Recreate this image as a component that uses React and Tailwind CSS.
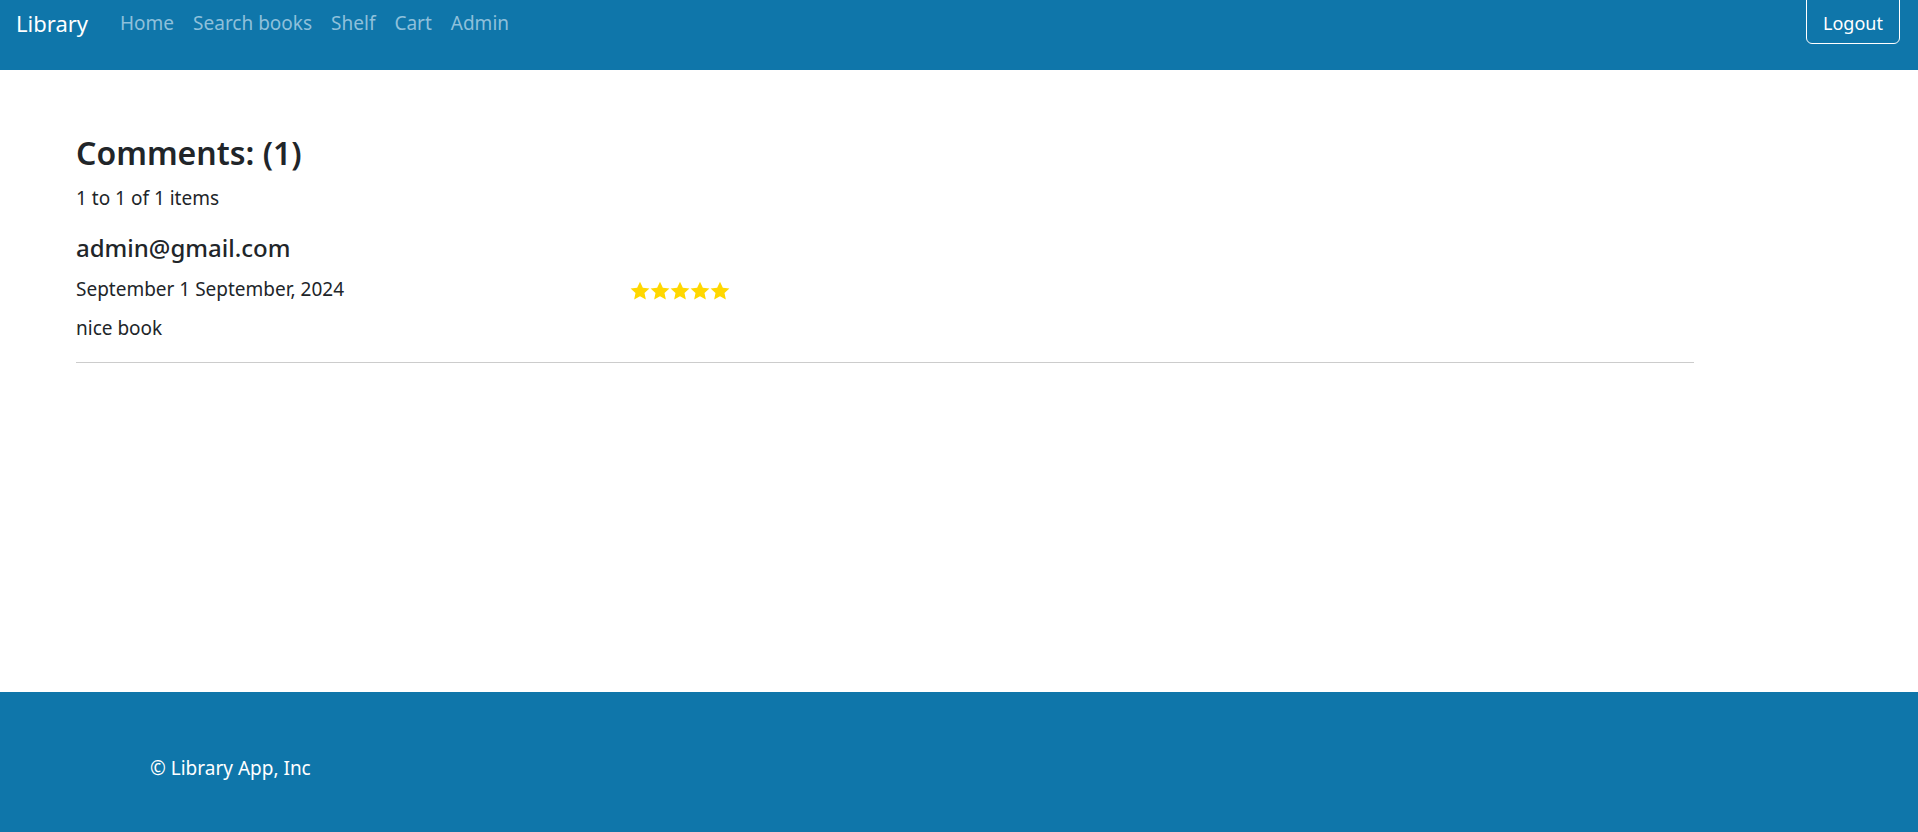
const navLinks = ["Home", "Search books", "Shelf", "Cart", "Admin"];

const Star = () => (
  <svg viewBox="0 0 24 24" className="w-[20px] h-[20px]" fill="#FFD700">
    <path d="M12 0.8l3.4 7.2 7.9.9-5.9 5.4 1.6 7.9L12 18.3l-7 3.9 1.6-7.9L.7 8.9l7.9-.9z" />
  </svg>
);

const Comment = ({ email, date, text, rating }) => (
  <div>
    <h5 className="mt-[23px] text-[24px] leading-[30px] font-medium text-[#212529]">
      {email}
    </h5>
    <div className="mt-[14px] flex items-center">
      <p className="w-[554px] leading-[24px]">{date}</p>
      <div className="flex mt-[3px]">
        {Array.from({ length: rating }).map((_, i) => (
          <Star key={i} />
        ))}
      </div>
    </div>
    <p className="mt-[15px] leading-[24px]">{text}</p>
    <hr className="mt-[22px] border-t border-[#cccccc]" />
  </div>
);

export default function App() {
  return (
    <div
      className="min-h-screen bg-white text-[#212529] text-[19px]"
      style={{ fontFamily: '"Segoe UI", "Noto Sans", "Open Sans", sans-serif' }}
    >
      {/* navbar */}
      <nav className="h-[70px] bg-[#0f76aa] flex items-start justify-between pl-[16px] pr-[18px]">
        <div className="flex items-center h-[46px]">
          <a className="text-white text-[22px] mr-[32px]">Library</a>
          <ul className="flex gap-[19px]">
            {navLinks.map((l) => (
              <li key={l} className="text-[#8ec0db] text-[19px]">
                {l}
              </li>
            ))}
          </ul>
        </div>
        <button className="-mt-[8px] h-[52px] w-[94px] pt-[10px] border border-white rounded-[6px] text-white text-[18px]">
          Logout
        </button>
      </nav>

      {/* comments */}
      <main className="h-[622px] pl-[76px] pr-[224px]">
        <h3 className="pt-[63px] text-[32px] leading-[40px] font-semibold">
          Comments: (1)
        </h3>
        <p className="mt-[13px] leading-[24px]">1 to 1 of 1 items</p>
        <Comment
          email="admin@gmail.com"
          date="September 1 September, 2024"
          text="nice book"
          rating={5}
        />
      </main>

      {/* footer */}
      <footer className="h-[140px] bg-[#0f76aa] flex items-center pl-[150px] pt-[12px]">
        <p className="text-white text-[19px]">© Library App, Inc</p>
      </footer>
    </div>
  );
}
